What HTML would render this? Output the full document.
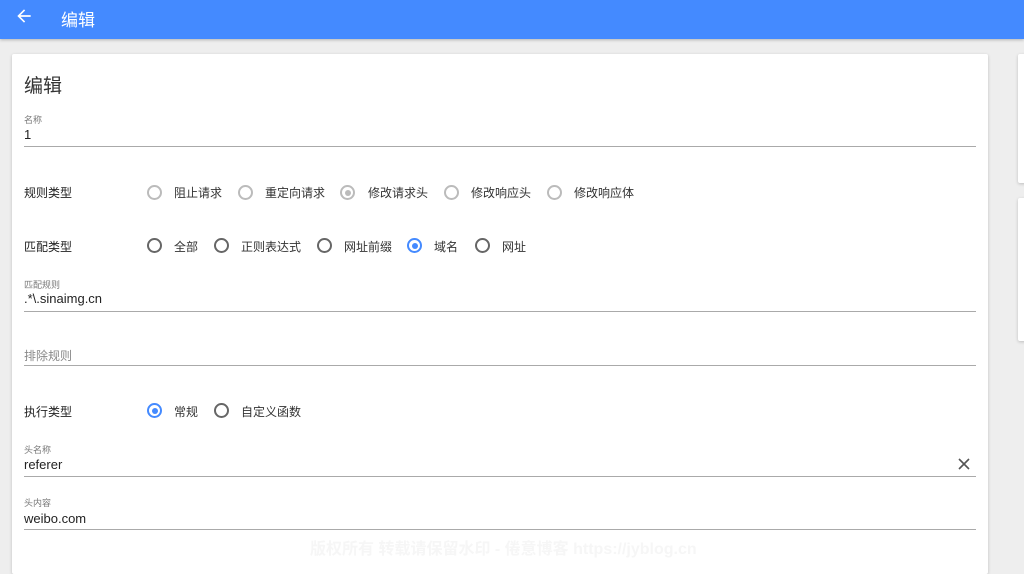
<!DOCTYPE html>
<html><head><meta charset="utf-8"><style>
*{margin:0;padding:0;box-sizing:border-box}
body{width:1024px;height:564px;overflow:hidden;background:#eeeeee;font-family:"Liberation Sans","Noto Sans CJK SC",sans-serif;position:relative;color:#333}
.hdr{position:absolute;left:0;top:0;width:1024px;height:39px;background:#448aff;box-shadow:0 1px 3px rgba(0,0,0,.25)}
.hdr .t{position:absolute;left:61px;top:6px;color:#fff;font-size:17px}
.card{position:absolute;background:#fff;box-shadow:0 1px 3px rgba(0,0,0,.2);border-radius:2px}
.a{position:absolute;white-space:nowrap}
.sm{font-size:9px;color:#777}
.v{font-size:13px;color:#222}
.line{position:absolute;left:24px;width:952px;height:1px;background:#aaa}
.lbl{font-size:12px;color:#222}
.r{position:absolute;width:15px;height:15px;border:2px solid #666;border-radius:50%}
.r.d{border-color:#bbb}
.r.on{border-color:#448aff}
.r.on::after{content:"";position:absolute;left:2.5px;top:2.5px;width:6px;height:6px;border-radius:50%;background:#448aff}
.r.dc::after{content:"";position:absolute;left:2.5px;top:2.5px;width:6px;height:6px;border-radius:50%;background:#bbb}
.rt{position:absolute;font-size:12px;color:#333;white-space:nowrap}
</style></head><body>
<div class="hdr">
<svg style="position:absolute;left:14px;top:6px" width="20" height="20" viewBox="0 0 24 24"><path d="M20 11H7.8l5.6-5.6L12 4l-8 8 8 8 1.4-1.4L7.8 13H20z" fill="#fff"/></svg>
<div class="t">编辑</div></div>
<div class="card" style="left:12px;top:54px;width:976px;height:520px"></div>
<div class="card" style="left:1018px;top:54px;width:20px;height:129px"></div>
<div class="card" style="left:1018px;top:198px;width:20px;height:143px"></div>

<div class="a" style="left:24px;top:71px;font-size:19px;color:#333">编辑</div>
<div class="a sm" style="left:24px;top:113px">名称</div>
<div class="a v" style="left:24px;top:127px">1</div>
<div class="line" style="top:146px"></div>

<div class="a lbl" style="left:24px;top:184px">规则类型</div>
<div class="r d" style="left:147px;top:185px"></div><div class="rt" style="left:174px;top:184px">阻止请求</div>
<div class="r d" style="left:238px;top:185px"></div><div class="rt" style="left:265px;top:184px">重定向请求</div>
<div class="r d dc" style="left:340px;top:185px"></div><div class="rt" style="left:368px;top:184px">修改请求头</div>
<div class="r d" style="left:444px;top:185px"></div><div class="rt" style="left:471px;top:184px">修改响应头</div>
<div class="r d" style="left:547px;top:185px"></div><div class="rt" style="left:574px;top:184px">修改响应体</div>

<div class="a lbl" style="left:24px;top:238px">匹配类型</div>
<div class="r" style="left:147px;top:238px"></div><div class="rt" style="left:174px;top:238px">全部</div>
<div class="r" style="left:214px;top:238px"></div><div class="rt" style="left:241px;top:238px">正则表达式</div>
<div class="r" style="left:317px;top:238px"></div><div class="rt" style="left:344px;top:238px">网址前缀</div>
<div class="r on" style="left:407px;top:238px"></div><div class="rt" style="left:434px;top:238px">域名</div>
<div class="r" style="left:475px;top:238px"></div><div class="rt" style="left:502px;top:238px">网址</div>

<div class="a sm" style="left:24px;top:278px">匹配规则</div>
<div class="a v" style="left:24px;top:291px">.*\.sinaimg.cn</div>
<div class="line" style="top:311px"></div>

<div class="a" style="left:24px;top:347px;font-size:12px;color:#888">排除规则</div>
<div class="line" style="top:365px"></div>

<div class="a lbl" style="left:24px;top:403px">执行类型</div>
<div class="r on" style="left:147px;top:403px"></div><div class="rt" style="left:174px;top:403px">常规</div>
<div class="r" style="left:214px;top:403px"></div><div class="rt" style="left:241px;top:403px">自定义函数</div>

<div class="a sm" style="left:24px;top:443px">头名称</div>
<div class="a v" style="left:24px;top:457px">referer</div>
<svg style="position:absolute;left:958px;top:458px" width="12" height="12" viewBox="0 0 12 12"><path d="M1 1L11 11M11 1L1 11" stroke="#555" stroke-width="1.6"/></svg>
<div class="line" style="top:476px"></div>

<div class="a sm" style="left:24px;top:496px">头内容</div>
<div class="a v" style="left:24px;top:511px">weibo.com</div>
<div class="line" style="top:529px"></div>

<div class="a" style="left:310px;top:535px;font-size:16px;font-weight:bold;color:#f6f6f6">版权所有 转载请保留水印 - 倦意博客 https://jyblog.cn</div>
</body></html>
